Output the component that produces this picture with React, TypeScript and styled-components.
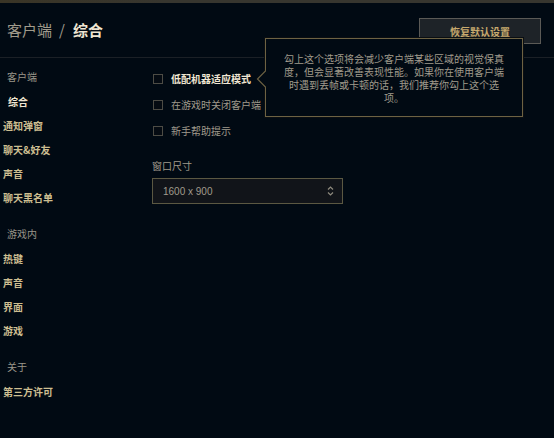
import styled, { createGlobalStyle } from "styled-components";

const GlobalStyle = createGlobalStyle`
  html, body {
    margin: 0;
    padding: 0;
    background: #010a13;
  }
  * {
    box-sizing: border-box;
  }
`;

const font = `"Noto Sans CJK SC", "Noto Sans", "Liberation Sans", sans-serif`;

type NavGroup = { title: string; items: string[] };

const groups: NavGroup[] = [
  { title: "客户端", items: ["综合", "通知弹窗", "聊天&好友", "声音", "聊天黑名单"] },
  { title: "游戏内", items: ["热键", "声音", "界面", "游戏"] },
  { title: "关于", items: ["第三方许可"] },
];

const tip =
  "勾上这个选项将会减少客户端某些区域的视觉保真度，但会显著改善表现性能。如果你在使用客户端时遇到丢帧或卡顿的话，我们推荐你勾上这个选项。";

export default function App() {
  return (
    <Page>
      <GlobalStyle />
      <TopBar />
      <Header>
        <Title>
          <span className="dim">客户端</span>
          <span className="slash">/</span>
          <span className="now">综合</span>
        </Title>
        <ResetButton>恢复默认设置</ResetButton>
      </Header>
      <Body>
        <Sidebar>
          {groups.map((g, gi) => (
            <Group key={g.title} $first={gi === 0}>
              <GroupTitle>{g.title}</GroupTitle>
              {g.items.map((it, i) => (
                <NavItem key={it} $active={gi === 0 && i === 0}>
                  {it}
                </NavItem>
              ))}
            </Group>
          ))}
        </Sidebar>
        <Main>
          <OptionRow>
            <Checkbox />
            <OptionLabel $strong>
              低配机器适应模式
              <Tooltip>
                <TipArrow width="10" height="18" viewBox="0 0 10 18">
                  <path d="M10 0.5 L1.5 9 L10 17.5" fill="#010a13" stroke="#6d6243" strokeWidth="1.2" />
                </TipArrow>
                {tip}
              </Tooltip>
            </OptionLabel>
          </OptionRow>
          <OptionRow>
            <Checkbox />
            <OptionLabel>在游戏时关闭客户端</OptionLabel>
          </OptionRow>
          <OptionRow>
            <Checkbox />
            <OptionLabel>新手帮助提示</OptionLabel>
          </OptionRow>
          <FieldLabel>窗口尺寸</FieldLabel>
          <Select>
            <span>1600 x 900</span>
            <svg width="7" height="12" viewBox="0 0 7 12">
              <path d="M1 4.5 L3.5 2 L6 4.5" fill="none" stroke="#8e8a7e" strokeWidth="1.2" />
              <path d="M1 7.5 L3.5 10 L6 7.5" fill="none" stroke="#8e8a7e" strokeWidth="1.2" />
            </svg>
          </Select>
        </Main>
      </Body>
    </Page>
  );
}

const Page = styled.div`
  width: 554px;
  height: 438px;
  overflow: hidden;
  background: #010a13;
  font-family: ${font};
  display: flex;
  flex-direction: column;
`;

const TopBar = styled.div`
  height: 3px;
  background: linear-gradient(90deg, #3a3526 0%, #37362f 30%, #37362f 100%);
  flex-shrink: 0;
`;

const Header = styled.div`
  height: 55px;
  flex-shrink: 0;
  display: flex;
  align-items: center;
  justify-content: space-between;
  padding: 0 13px 0 7px;
  border-bottom: 1px solid #1b2026;
`;

const Title = styled.div`
  font-size: 15px;
  line-height: 20px;
  .dim {
    color: #a09b8c;
  }
  .slash {
    color: #a09b8c;
    margin: 0 8px 0 7px;
  }
  .now {
    color: #f0e6d2;
    font-weight: 700;
  }
`;

const ResetButton = styled.div`
  width: 122px;
  height: 26px;
  margin-top: 2px;
  display: flex;
  align-items: center;
  justify-content: center;
  background: #1e2328;
  border: 1px solid #5b5a56;
  color: #c8aa6e;
  font-size: 10px;
  font-weight: 700;
`;

const Body = styled.div`
  display: flex;
  flex: 1;
`;

const Sidebar = styled.div`
  width: 152px;
  flex-shrink: 0;
  padding-top: 6px;
`;

const Group = styled.div<{ $first: boolean }>`
  margin-top: ${({ $first }) => ($first ? "0" : "11px")};
`;

const GroupTitle = styled.div`
  height: 26px;
  line-height: 26px;
  padding-left: 7px;
  font-size: 10px;
  color: #9a968a;
`;

const NavItem = styled.div<{ $active: boolean }>`
  height: 24px;
  line-height: 24px;
  padding-left: ${({ $active }) => ($active ? "8px" : "3px")};
  font-size: 10px;
  font-weight: 700;
  color: ${({ $active }) => ($active ? "#f0e6d2" : "#cdbe91")};
`;

const Main = styled.div`
  flex: 1;
  padding-top: 8px;
  display: flex;
  flex-direction: column;
  align-items: flex-start;
`;

const OptionRow = styled.div`
  height: 26px;
  display: flex;
  align-items: center;
  gap: 8px;
  padding-left: 1px;
`;

const Checkbox = styled.div`
  width: 10px;
  height: 10px;
  border: 1px solid #4d4c45;
  background: #050b12;
`;

const OptionLabel = styled.span<{ $strong?: boolean }>`
  position: relative;
  font-size: 10px;
  line-height: 14px;
  font-weight: ${({ $strong }) => ($strong ? 700 : 400)};
  color: ${({ $strong }) => ($strong ? "#f0e6d2" : "#a09b8c")};
`;

const Tooltip = styled.div`
  position: absolute;
  left: calc(100% + 14px);
  top: -34px;
  width: 258px;
  height: 79px;
  padding: 13px 16px 0;
  background: #010a13;
  border: 1px solid #6d6243;
  box-shadow: 0 0 0 1px #0a0e12;
  color: #a09b8c;
  font-size: 10px;
  font-weight: 400;
  line-height: 13px;
  text-align: center;
  z-index: 2;
`;

const TipArrow = styled.svg`
  position: absolute;
  left: -10px;
  top: 31px;
`;

const FieldLabel = styled.div`
  margin-top: 15px;
  font-size: 10px;
  line-height: 14px;
  color: #a09b8c;
`;

const Select = styled.div`
  margin-top: 5px;
  width: 191px;
  height: 26px;
  display: flex;
  align-items: center;
  justify-content: space-between;
  padding: 0 8px 0 10px;
  background: #111419;
  border: 1px solid #5b5842;
  color: #a09b8c;
  font-size: 10px;
  font-family: "Liberation Sans", "Noto Sans", sans-serif;
`;
